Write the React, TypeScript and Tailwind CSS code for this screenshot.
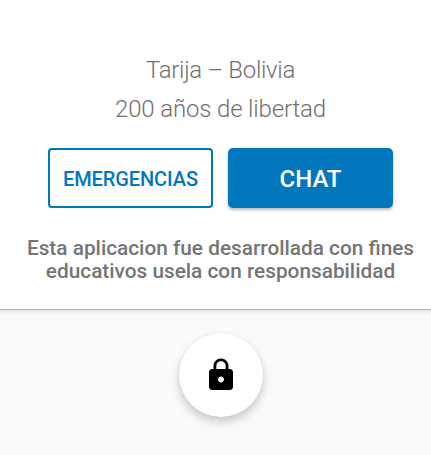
export default function App() {
  return (
    <main className="flex h-[455px] w-[431px] flex-col overflow-hidden bg-[#fafafa] font-['Roboto',sans-serif]">
      <section className="-mx-2 h-[309px] shrink-0 bg-white px-2 pt-[54px] text-center shadow-[0_1px_1px_rgba(0,0,0,0.18),0_1px_5px_rgba(0,0,0,0.16)]">
        <p className="ml-[10px] text-[24px] leading-[32px] font-light tracking-[-0.3px] text-[#707070]">Tarija – Bolivia</p>
        <p className="mt-[7px] ml-[10px] text-[24px] leading-[32px] font-light tracking-[-0.15px] text-[#707070]">200 años de libertad</p>
        <div className="mt-[23px] ml-[48px] flex gap-[15px]">
          <button className="h-[60px] w-[165px] rounded-[4px] border-2 border-[#0277bd] bg-white pt-[2px] text-[20px] font-medium tracking-[-0.1px] text-[#0277bd]">EMERGENCIAS</button>
          <button className="h-[60px] w-[165px] rounded-[5px] bg-[#0277bd] pt-[2px] text-[24px] font-medium text-white shadow-[0_2px_3px_rgba(0,0,0,0.28)]">CHAT</button>
        </div>
        <p className="mt-[29px] ml-[10px] text-[20.8px] leading-[23px] font-medium whitespace-nowrap text-[#757575]">
          Esta aplicacion fue desarrollada con fines
          <br />
          educativos usela con responsabilidad
        </p>
      </section>
      <div className="flex pt-[24px] pl-[179px]">
        <button aria-label="Bloquear" className="flex h-[84px] w-[84px] items-center justify-center rounded-full bg-white shadow-[0_5px_10px_rgba(0,0,0,0.2),0_0_2px_rgba(0,0,0,0.08)]">
          <svg viewBox="0 0 24 24" className="h-[36px] w-[36px] fill-black">
            <path d="M18 8h-1V6c0-2.76-2.24-5-5-5S7 3.24 7 6v2H6c-1.1 0-2 .9-2 2v10c0 1.1.9 2 2 2h12c1.1 0 2-.9 2-2V10c0-1.1-.9-2-2-2zm-6 9c-1.1 0-2-.9-2-2s.9-2 2-2 2 .9 2 2-.9 2-2 2zm3.1-9H8.9V6c0-1.71 1.39-3.1 3.1-3.1s3.1 1.39 3.1 3.1v2z" />
          </svg>
        </button>
      </div>
    </main>
  );
}
